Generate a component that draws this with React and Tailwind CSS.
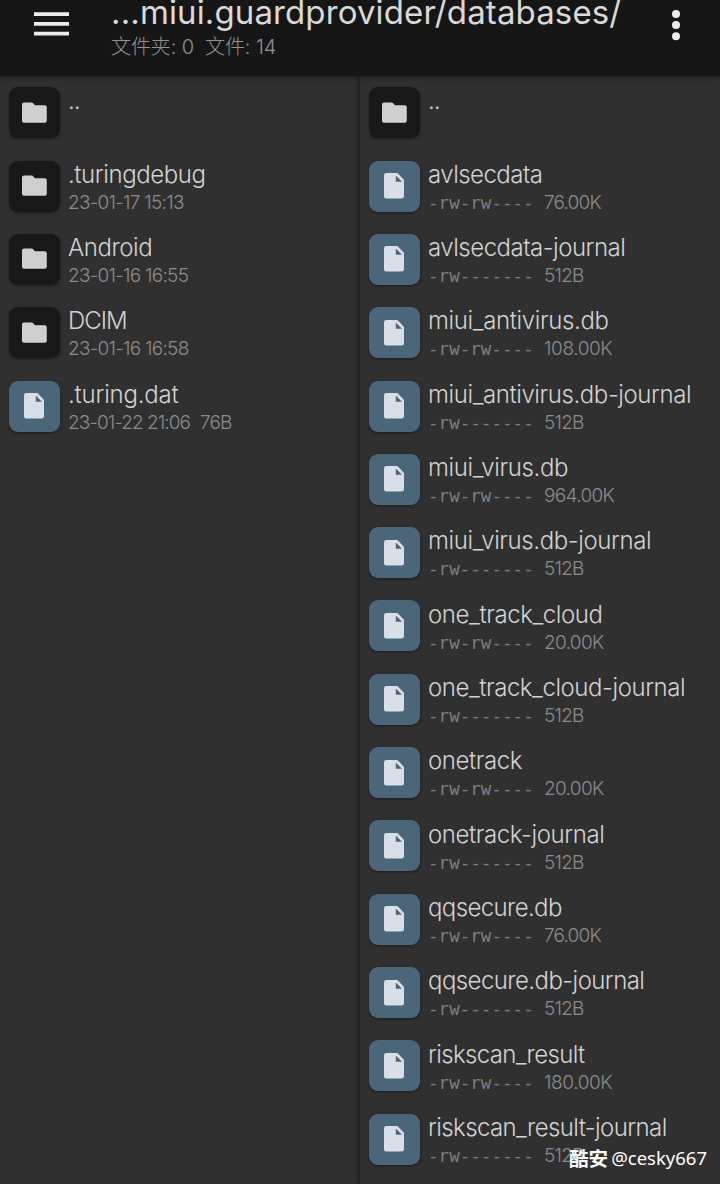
const leftItems = [
  { name: "..", kind: "folder", track: "tracking-[-0.9px]" },
  { name: ".turingdebug", kind: "folder", meta: "23-01-17 15:13", track: "tracking-[-0.42px]", metaTrack: "tracking-[-0.75px]" },
  { name: "Android", kind: "folder", meta: "23-01-16 16:55", track: "tracking-[-0.42px]", metaTrack: "tracking-[-0.75px]" },
  { name: "DCIM", kind: "folder", meta: "23-01-16 16:58", track: "tracking-[-1px]", metaTrack: "tracking-[-0.75px]" },
  { name: ".turing.dat", kind: "file", meta: "23-01-22 21:06", size: "76B", track: "tracking-[-0.2px]", metaTrack: "tracking-[-0.95px]" },
];

const rightItems = [
  { name: "..", kind: "folder", track: "tracking-[-0.9px]" },
  { name: "avlsecdata", perm: "-rw-rw----", size: "76.00K", track: "tracking-[-0.53px]" },
  { name: "avlsecdata-journal", perm: "-rw-------", size: "512B", track: "tracking-[-0.5px]" },
  { name: "miui_antivirus.db", perm: "-rw-rw----", size: "108.00K", track: "tracking-[-0.37px]", sizeTrack: "tracking-[-0.4px]" },
  { name: "miui_antivirus.db-journal", perm: "-rw-------", size: "512B", track: "tracking-[-0.41px]" },
  { name: "miui_virus.db", perm: "-rw-rw----", size: "964.00K", track: "tracking-[-0.36px]", sizeTrack: "tracking-[-0.65px]" },
  { name: "miui_virus.db-journal", perm: "-rw-------", size: "512B", track: "tracking-[-0.39px]" },
  { name: "one_track_cloud", perm: "-rw-rw----", size: "20.00K", track: "tracking-[-0.4px]", sizeTrack: "tracking-[-0.65px]" },
  { name: "one_track_cloud-journal", perm: "-rw-------", size: "512B", track: "tracking-[-0.44px]" },
  { name: "onetrack", perm: "-rw-rw----", size: "20.00K", track: "tracking-[-0.42px]", sizeTrack: "tracking-[-0.65px]" },
  { name: "onetrack-journal", perm: "-rw-------", size: "512B", track: "tracking-[-0.4px]" },
  { name: "qqsecure.db", perm: "-rw-rw----", size: "76.00K", track: "tracking-[-0.62px]" },
  { name: "qqsecure.db-journal", perm: "-rw-------", size: "512B", track: "tracking-[-0.57px]" },
  { name: "riskscan_result", perm: "-rw-rw----", size: "180.00K", track: "tracking-[-0.65px]", sizeTrack: "tracking-[-0.4px]" },
  { name: "riskscan_result-journal", perm: "-rw-------", size: "512B", track: "tracking-[-0.6px]" },
];

function FolderIcon() {
  return (
    <svg width="26" height="22" viewBox="0 0 26 22" fill="#cfcfcf" aria-hidden="true">
      <path d="M2 0.6H9.8Q10.6 0.6 11.1 1.2L13 3.2H22.8Q24.8 3.2 24.8 5.2V18.8Q24.8 20.8 22.8 20.8H2Q0 20.8 0 18.8V2.6Q0 0.6 2 0.6Z" />
    </svg>
  );
}

function FileIcon() {
  return (
    <svg width="21" height="26" viewBox="0 0 21 26" aria-hidden="true">
      <path fill="#d9dfe7" fillRule="evenodd" d="M2.4 0H12.6Q13.4 0 14 0.6L19.4 6.2Q20 6.9 20 7.6V23.2Q20 25.6 17.6 25.6H2.4Q0 25.6 0 23.2V2.4Q0 0 2.4 0ZM11.8 2.6V8.8H18Z" />
    </svg>
  );
}

function Row({ item }) {
  const folder = item.kind === "folder";
  return (
    <li className="flex h-[73.33px] shrink-0 gap-2 pl-[9px] pt-[11.2px]">
      <div className={folder
        ? "flex size-[51px] shrink-0 items-center justify-center rounded-[9px] bg-[#181818] shadow-[0_1px_3px_rgba(0,0,0,0.45)]"
        : "flex size-[51px] shrink-0 items-center justify-center rounded-[9px] bg-[#4b6678] shadow-[0_1px_3px_rgba(0,0,0,0.45)]"}>
        {folder ? <FolderIcon /> : <FileIcon />}
      </div>
      <div className="-mt-[0.8px] whitespace-nowrap">
        <div className={`h-[31px] text-[24px] leading-[30px] font-light text-[#d2d2d2] ${item.track}`}>{item.name}</div>
        {(item.meta || item.perm) && (
          <div className="flex h-6 items-baseline text-[19px] leading-6 font-light text-[#8c8c8c]">
            {item.perm
              ? <span className="w-[116px] font-['DejaVu_Sans_Mono',monospace] text-[17.4px] tracking-[0.1px] text-[#7f7f7f]">{item.perm}</span>
              : <span className={item.metaTrack}>{item.meta}</span>}
            {item.size && <span className={item.perm ? (item.sizeTrack || "tracking-[-0.8px]") : "pl-[10px] tracking-[-0.9px]"}>{item.size}</span>}
          </div>
        )}
      </div>
    </li>
  );
}

export default function App() {
  return (
    <div className="relative flex h-[1184px] w-[720px] flex-col overflow-hidden bg-[#303030] font-['Inter','Noto_Sans_CJK_SC',sans-serif]">
      <header className="z-10 flex h-[76px] shrink-0 bg-[#161616] shadow-[0_1px_5px_rgba(0,0,0,0.5)]">
        <button className="flex h-[47px] w-[111px] shrink-0 items-center pl-[34px]" aria-label="Menu">
          <svg width="35" height="24" viewBox="0 0 35 24" fill="#ececec">
            <path d="M0 0.3H35V4H0ZM0 10H35V13.7H0ZM0 19.7H35V23.4H0Z" />
          </svg>
        </button>
        <div className="flex flex-1 flex-col whitespace-nowrap">
          <h1 className="-mt-[9px] h-[42px] text-[33px] leading-[42px] font-normal tracking-[0.12px] text-[#d9d9d9]">...miui.guardprovider/databases/</h1>
          <p className="h-[28px] text-[20px] leading-[29px] font-light tracking-[-0.1px] whitespace-pre text-[#929292]">文件夹: 0  文件: 14</p>
        </div>
        <button className="flex h-[50px] w-[88px] shrink-0 items-center justify-center" aria-label="More">
          <svg width="8" height="31" viewBox="0 0 8 31" fill="#ececec">
            <circle cx="4" cy="4" r="4" />
            <circle cx="4" cy="15.1" r="4" />
            <circle cx="4" cy="26.2" r="4" />
          </svg>
        </button>
      </header>
      <main className="grid min-h-0 flex-1 grid-cols-2">
        <ul className="flex flex-col">
          {leftItems.map((item) => <Row key={item.name} item={item} />)}
        </ul>
        <ul className="flex flex-col shadow-[-1px_0_5px_rgba(0,0,0,0.55)]">
          {rightItems.map((item) => <Row key={item.name} item={item} />)}
        </ul>
      </main>
      <div className="absolute right-[13px] bottom-[12px] flex items-center whitespace-nowrap text-white">
        <span className="font-['Noto_Sans_CJK_SC',sans-serif] text-[19.5px] leading-7 font-bold">酷安</span>
        <span className="pl-[3px] font-['Noto_Sans',sans-serif] text-[18.5px] leading-7">@cesky667</span>
      </div>
    </div>
  );
}
